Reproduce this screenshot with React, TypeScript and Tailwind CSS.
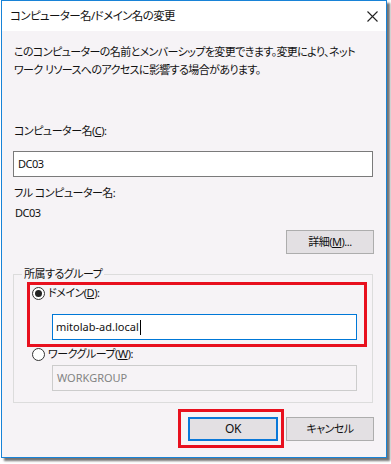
import React from "react";

const font = {
  fontFamily: '"Noto Sans", "Noto Sans CJK JP", sans-serif',
  fontFeatureSettings: '"palt"',
};

function Radio({ checked }: { checked?: boolean }) {
  return (
    <span className="w-[13px] h-[13px] rounded-full border border-[#333] bg-white flex items-center justify-center shrink-0">
      {checked && <span className="w-[7px] h-[7px] rounded-full bg-[#222]" />}
    </span>
  );
}

function Btn({ children, className = "" }: { children: React.ReactNode; className?: string }) {
  return (
    <div
      className={`h-[24px] w-[88px] bg-[#e3e0e3] border border-[#adadad] flex items-center justify-center text-[#111] ${className}`}
    >
      {children}
    </div>
  );
}

export default function App() {
  return (
    <div className="w-[391px] h-[464px] bg-white text-[#111] text-[11px] leading-[18px] tracking-[-0.5px]" style={font}>
      <div className="ml-[1px] w-[386px] h-[458px] border border-[#1883d7] shadow-[3px_3px_2px_rgba(0,0,0,0.55)] flex flex-col">
        {/* title bar */}
        <div className="h-[30px] bg-white flex items-center justify-between pl-[8px] pr-[8px] shrink-0">
          <span className="text-[11.5px] tracking-[-0.6px]">コンピューター名/ドメイン名の変更</span>
          <svg width="11" height="11" viewBox="0 0 11 11">
            <path d="M0.5 0.5 L10.5 10.5 M10.5 0.5 L0.5 10.5" stroke="#222" strokeWidth="1.1" />
          </svg>
        </div>

        {/* body */}
        <div className="flex-1 bg-[#f6f3f6] pl-[11px] pr-[12px] flex flex-col">
          <p className="mt-[12px] pl-[1px] whitespace-nowrap tracking-[-0.6px]">
            このコンピューターの名前とメンバーシップを変更できます。変更により、ネット
            <br />
            ワーク リソースへのアクセスに影響する場合があります。
          </p>

          <div className="mt-[43px] pl-[1px]">
            コンピューター名(<span className="underline">C</span>):
          </div>
          <div className="mt-[11px] h-[26px] w-[360px] bg-white border border-[#7a7a7a] flex items-center pl-[4px]">
            DC03
          </div>

          <div className="mt-[7px] pl-[1px]">フル コンピューター名:</div>
          <div className="mt-[2px] pl-[2px]">DC03</div>

          <div className="mt-[8px] flex justify-end">
            <Btn>
              詳細(<span className="underline">M</span>)...
            </Btn>
          </div>

          <fieldset className="mt-[11px] w-[360px] border border-[#dcdcdc] p-0 m-0 pb-[11px]">
            <legend className="ml-[8px] px-[2px]">所属するグループ</legend>

            <div className="-mt-[1px] ml-[13px] w-[340px] border-[3px] border-[#e8101e] pb-[4px]">
              <div className="h-[16px] flex items-center pl-[2px] gap-[3px]">
                <Radio checked />
                <span>
                  ドメイン(<span className="underline">D</span>):
                </span>
              </div>
              <div className="mt-[13px] ml-[22px] h-[26px] w-[305px] bg-white border border-[#0078d7] flex items-center pl-[3px] tracking-normal">
                mitolab-ad.local
                <span className="ml-[1px] w-px h-[15px] bg-black" />
              </div>
            </div>

            <div className="h-[14px] flex items-center ml-[18px] gap-[3px]">
              <Radio />
              <span>
                ワークグループ(<span className="underline">W</span>):
              </span>
            </div>
            <div className="mt-[4px] ml-[38px] h-[26px] w-[305px] border border-[#cccccc] flex items-center pl-[4px] text-[#838383] tracking-normal">
              WORKGROUP
            </div>
          </fieldset>

          <div className="mt-[6px] flex justify-end items-start gap-[2px]">
            <div className="border-[3px] border-[#e8101e] pl-[7px] pr-[3px] pt-[5px] pb-[4px]">
              <div className="h-[24px] w-[90px] bg-[#e3e0e3] border-2 border-[#0a78d8] flex items-center justify-center text-[12px]">
                OK
              </div>
            </div>
            <Btn className="mt-[8px]">キャンセル</Btn>
          </div>
        </div>
      </div>
    </div>
  );
}
